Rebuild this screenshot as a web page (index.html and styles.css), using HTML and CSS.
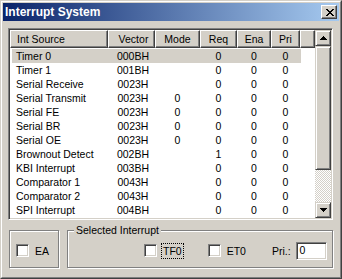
FILE: index.html
```html
<!DOCTYPE html>
<html lang="en">
<head>
    <meta charset="UTF-8">
    <title>Interrupt System</title>
    <link rel="stylesheet" href="styles.css">
</head>
<body>

    <div class="window">
        <div class="frame">

            <!-- Title Bar -->
            <div class="titlebar">
                <span class="title">Interrupt System</span>
                <div class="closebtn">
                    <svg width="8" height="7" viewBox="0 0 8 7" shape-rendering="crispEdges">
                        <path d="M0 0h2v1h-2z M6 0h2v1h-2z M1 1h2v1h-2z M5 1h2v1h-2z M2 2h4v1h-4z M3 3h2v1h-2z M2 4h4v1h-4z M1 5h2v1h-2z M5 5h2v1h-2z M0 6h2v1h-2z M6 6h2v1h-2z" fill="#000"/>
                    </svg>
                </div>
            </div>

            <div class="content">

                <!-- Interrupt List -->
                <div class="listbox">
                    <div class="listarea">
                        <div class="header">
                            <div class="hcell c-src">Int Source</div>
                            <div class="hcell c-vec">Vector</div>
                            <div class="hcell c-mode">Mode</div>
                            <div class="hcell c-req">Req</div>
                            <div class="hcell c-ena">Ena</div>
                            <div class="hcell c-pri">Pri</div>
                            <div class="hcell c-fill"></div>
                        </div>
                        <div class="rows">
                            <div class="row selected"><span class="c-src">Timer 0</span><span class="c-vec">000BH</span><span class="c-mode"></span><span class="c-req">0</span><span class="c-ena">0</span><span class="c-pri">0</span></div>
                            <div class="row"><span class="c-src">Timer 1</span><span class="c-vec">001BH</span><span class="c-mode"></span><span class="c-req">0</span><span class="c-ena">0</span><span class="c-pri">0</span></div>
                            <div class="row"><span class="c-src">Serial Receive</span><span class="c-vec">0023H</span><span class="c-mode"></span><span class="c-req">0</span><span class="c-ena">0</span><span class="c-pri">0</span></div>
                            <div class="row"><span class="c-src">Serial Transmit</span><span class="c-vec">0023H</span><span class="c-mode">0</span><span class="c-req">0</span><span class="c-ena">0</span><span class="c-pri">0</span></div>
                            <div class="row"><span class="c-src">Serial FE</span><span class="c-vec">0023H</span><span class="c-mode">0</span><span class="c-req">0</span><span class="c-ena">0</span><span class="c-pri">0</span></div>
                            <div class="row"><span class="c-src">Serial BR</span><span class="c-vec">0023H</span><span class="c-mode">0</span><span class="c-req">0</span><span class="c-ena">0</span><span class="c-pri">0</span></div>
                            <div class="row"><span class="c-src">Serial OE</span><span class="c-vec">0023H</span><span class="c-mode">0</span><span class="c-req">0</span><span class="c-ena">0</span><span class="c-pri">0</span></div>
                            <div class="row"><span class="c-src">Brownout Detect</span><span class="c-vec">002BH</span><span class="c-mode"></span><span class="c-req">1</span><span class="c-ena">0</span><span class="c-pri">0</span></div>
                            <div class="row"><span class="c-src">KBI Interrupt</span><span class="c-vec">003BH</span><span class="c-mode"></span><span class="c-req">0</span><span class="c-ena">0</span><span class="c-pri">0</span></div>
                            <div class="row"><span class="c-src">Comparator 1</span><span class="c-vec">0043H</span><span class="c-mode"></span><span class="c-req">0</span><span class="c-ena">0</span><span class="c-pri">0</span></div>
                            <div class="row"><span class="c-src">Comparator 2</span><span class="c-vec">0043H</span><span class="c-mode"></span><span class="c-req">0</span><span class="c-ena">0</span><span class="c-pri">0</span></div>
                            <div class="row"><span class="c-src">SPI Interrupt</span><span class="c-vec">004BH</span><span class="c-mode"></span><span class="c-req">0</span><span class="c-ena">0</span><span class="c-pri">0</span></div>
                        </div>
                    </div>

                    <!-- Scrollbar -->
                    <div class="scrollbar">
                        <div class="sbtn">
                            <svg width="7" height="4" viewBox="0 0 7 4" shape-rendering="crispEdges">
                                <path d="M3 0h1v1h-1z M2 1h3v1h-3z M1 2h5v1h-5z M0 3h7v1h-7z" fill="#000"/>
                            </svg>
                        </div>
                        <div class="thumb"></div>
                        <div class="track"></div>
                        <div class="sbtn">
                            <svg width="7" height="4" viewBox="0 0 7 4" shape-rendering="crispEdges">
                                <path d="M0 0h7v1h-7z M1 1h5v1h-5z M2 2h3v1h-3z M3 3h1v1h-1z" fill="#000"/>
                            </svg>
                        </div>
                    </div>
                </div>

                <!-- Bottom Groups -->
                <div class="bottom">
                    <div class="group group-ea">
                        <div class="check"></div>
                        <span class="checklabel">EA</span>
                    </div>
                    <div class="group group-sel">
                        <span class="legend">Selected Interrupt</span>
                        <div class="check"></div>
                        <span class="checklabel focused">TF0</span>
                        <div class="check check-et0"></div>
                        <span class="checklabel">ET0</span>
                        <span class="prilabel">Pri.:</span>
                        <div class="textbox">0</div>
                    </div>
                </div>

            </div>
        </div>
    </div>

</body>
</html>
```

FILE: styles.css
```css
body {
    margin: 0;
    padding: 0;
    font-family: "Liberation Sans", Arial, sans-serif;
    font-size: 10.5px;
    color: #000;
    background-color: #d4d0c8;
}

/* Window Frame */
.window {
    width: 342px;
    height: 279px;
    box-sizing: border-box;
    border: 1px solid;
    border-color: #d4d0c8 #404040 #404040 #d4d0c8;
    background-color: #d4d0c8;
}

.frame {
    height: 100%;
    box-sizing: border-box;
    border: 1px solid;
    border-color: #fff #808080 #808080 #fff;
    padding: 1px;
    display: flex;
    flex-direction: column;
}

/* Title Bar */
.titlebar {
    height: 18px;
    display: flex;
    align-items: center;
    justify-content: space-between;
    padding: 0 2px;
    background: linear-gradient(to right, #0a246a, #a6caf0);
}

.title {
    color: white;
    font-weight: bold;
    font-size: 12px;
}

.closebtn {
    width: 16px;
    height: 14px;
    box-sizing: border-box;
    display: flex;
    align-items: center;
    justify-content: center;
    padding-left: 1px;
    background-color: #d4d0c8;
    border: 1px solid;
    border-color: #fff #404040 #404040 #fff;
    box-shadow: inset -1px -1px #808080;
}

/* Content */
.content {
    padding: 7px 6px 0 5px;
}

.listbox {
    height: 192px;
    box-sizing: border-box;
    display: flex;
    padding: 1px;
    background-color: white;
    border: 1px solid;
    border-color: #808080 #fff #fff #808080;
    box-shadow: inset 1px 1px #404040, inset -1px -1px #d4d0c8;
}

.listarea {
    flex: 1;
}

/* List Header */
.header {
    display: flex;
    height: 18px;
}

.hcell {
    box-sizing: border-box;
    height: 18px;
    line-height: 16px;
    text-align: center;
    background-color: #d4d0c8;
    border: 1px solid;
    border-color: #fff #404040 #404040 #fff;
    box-shadow: inset -1px -1px #808080;
}

.hcell.c-src {
    width: 98px;
    text-align: left;
    padding-left: 6px;
}

.hcell.c-vec { width: 47px; padding-left: 4px; }
.hcell.c-fill { flex: 1; }

.c-vec { width: 47px; }
.c-mode { width: 45px; }
.c-req { width: 37px; }
.c-ena { width: 34px; }
.c-pri { width: 29px; }

/* List Rows */
.rows {
    padding-top: 1px;
}

.row {
    display: flex;
    height: 14px;
    line-height: 14px;
    width: 289px;
    margin-left: 2px;
}

.row span {
    text-align: center;
    white-space: nowrap;
}

.row .c-src {
    width: 96px;
    padding-left: 4px;
    box-sizing: border-box;
    text-align: left;
}

.row .c-vec {
    padding-left: 3px;
    box-sizing: border-box;
}

.row.selected {
    background-color: #d4d0c8;
}

/* Scrollbar */
.scrollbar {
    width: 16px;
    display: flex;
    flex-direction: column;
}

.sbtn, .thumb {
    box-sizing: border-box;
    background-color: #d4d0c8;
    border: 1px solid;
    border-color: #d4d0c8 #404040 #404040 #d4d0c8;
    box-shadow: inset 1px 1px #fff, inset -1px -1px #808080;
}

.sbtn {
    height: 16px;
    display: flex;
    align-items: center;
    justify-content: center;
}

.thumb {
    height: 124px;
}

.track {
    flex: 1;
    background-color: #fff;
    background-image: conic-gradient(#d4d0c8 25%, #fff 0 50%, #d4d0c8 0 75%, #fff 0);
    background-size: 2px 2px;
}

/* Bottom Groups */
.bottom {
    display: flex;
    gap: 8px;
    margin-top: 10px;
    margin-left: 1px;
}

.group {
    position: relative;
    height: 38px;
    box-sizing: border-box;
    border: 1px solid #808080;
    box-shadow: 1px 1px 0 #fff, inset 1px 1px 0 #fff;
    display: flex;
    align-items: center;
    padding-top: 3px;
}

.group-ea {
    width: 50px;
    padding-left: 6px;
}

.group-sel {
    width: 266px;
    padding-left: 76px;
}

.legend {
    position: absolute;
    top: -7px;
    left: 6px;
    padding: 0 2px;
    line-height: 12px;
    background-color: #d4d0c8;
}

.check {
    width: 13px;
    height: 13px;
    box-sizing: border-box;
    background-color: white;
    border: 1px solid;
    border-color: #808080 #fff #fff #808080;
    box-shadow: inset 1px 1px #404040, inset -1px -1px #d4d0c8;
}

.checklabel {
    margin-left: 4px;
    line-height: 14px;
    padding: 0 1px;
    border: 1px solid transparent;
}

.checklabel.focused {
    border: 1px dotted #000;
}

.check-et0 {
    margin-left: 24px;
}

.prilabel {
    margin-left: 24px;
}

.textbox {
    width: 31px;
    height: 18px;
    box-sizing: border-box;
    margin-left: 5px;
    padding-left: 3px;
    line-height: 14px;
    background-color: white;
    border: 1px solid;
    border-color: #808080 #fff #fff #808080;
    box-shadow: inset 1px 1px #404040, inset -1px -1px #d4d0c8;
}
```
